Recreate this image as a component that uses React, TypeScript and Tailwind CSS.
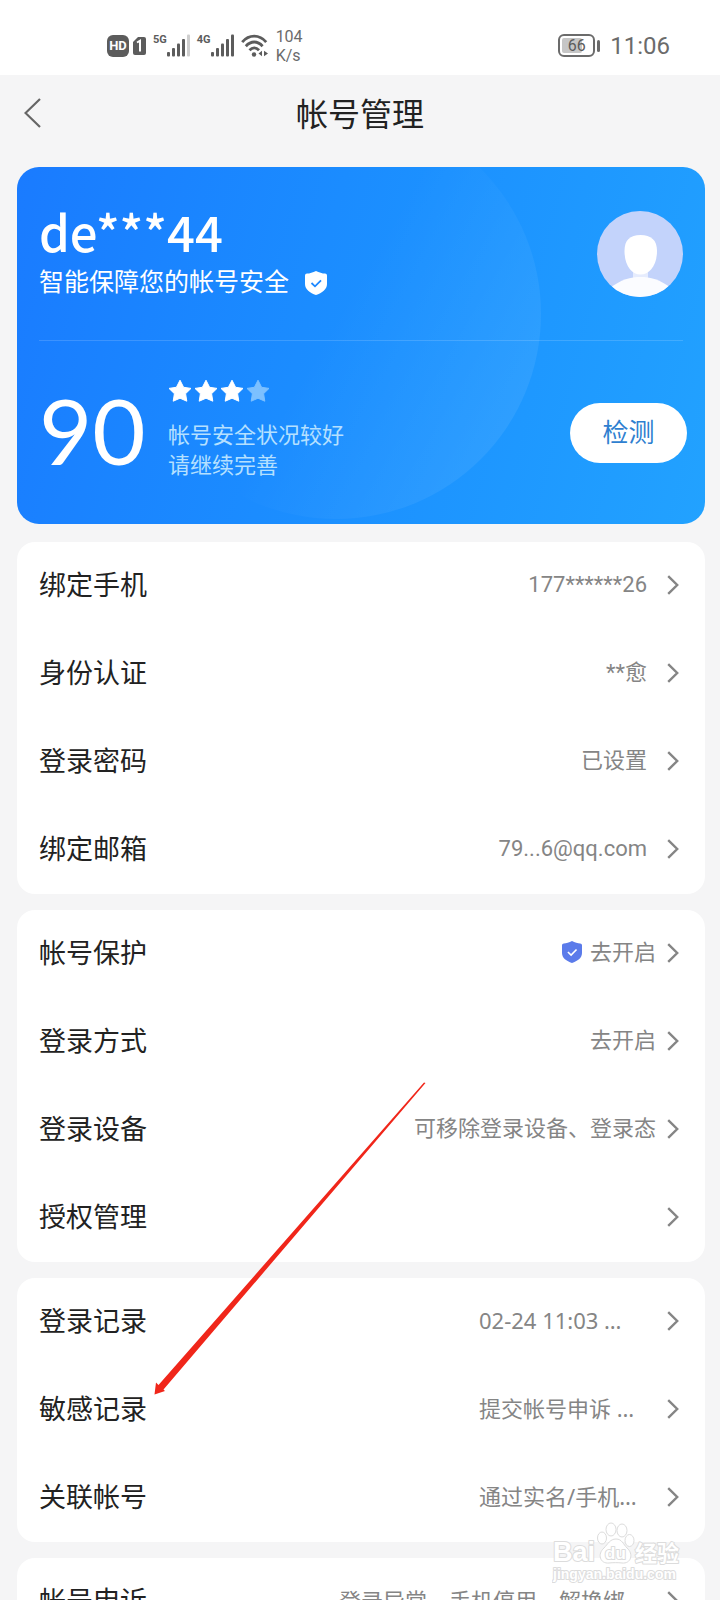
import { ReactNode } from 'react'

type Row = {
    label: string
    value?: string
    shield?: boolean
}

type Group = {
    rows: Row[]
    gap: string
    valueClass?: string
}

const groups: Group[] = [
    {
        gap: 'gap-5',
        rows: [
            { label: '绑定手机', value: '177******26' },
            { label: '身份认证', value: '**愈' },
            { label: '登录密码', value: '已设置' },
            { label: '绑定邮箱', value: '79...6@qq.com' },
        ],
    },
    {
        gap: 'gap-[11px]',
        rows: [
            { label: '帐号保护', value: '去开启', shield: true },
            { label: '登录方式', value: '去开启' },
            { label: '登录设备', value: '可移除登录设备、登录态' },
            { label: '授权管理' },
        ],
    },
    {
        gap: 'gap-5',
        valueClass: "w-[168px] font-['Noto_Sans','Noto_Sans_CJK_SC',sans-serif]",
        rows: [
            { label: '登录记录', value: '02-24 11:03 …' },
            { label: '敏感记录', value: '提交帐号申诉 …' },
            { label: '关联帐号', value: '通过实名/手机…' },
        ],
    },
    {
        gap: 'gap-5',
        valueClass: "w-[308px] font-['Noto_Sans','Noto_Sans_CJK_SC',sans-serif]",
        rows: [{ label: '帐号申诉', value: '登录异常、手机停用、解换绑…' }],
    },
]

function Shield({ className, check }: { className: string; check: string }) {
    return (
        <svg viewBox="0 0 22 24" className={className} aria-hidden="true">
            <path
                d="M11 0C14 1.6 17.500 2.500 20 2.600Q22 2.800 22 4.600V13C22 18.500 17 22 11 24C5 22 0 18.500 0 13V4.600Q0 2.800 2 2.600C4.500 2.500 8 1.600 11 0Z"
                fill="currentColor"
            />
            <path d="M6.500 12L10 15.300L16 9.300" fill="none" stroke={check} strokeWidth="1.800" />
        </svg>
    )
}

function Chevron() {
    return (
        <svg viewBox="0 0 12 20" className="h-5 w-3 shrink-0" fill="none" stroke="#858585" strokeWidth="2.400" aria-hidden="true">
            <path d="M1.200 1.200L10.200 10L1.200 18.800" />
        </svg>
    )
}

function Signal({ label, weak }: { label: string; weak?: boolean }) {
    return (
        <div className="flex items-start">
            <span className="text-[11px] leading-3 font-bold">{label}</span>
            <svg viewBox="0 0 23 23" className="h-[23px] w-[23px]" fill="currentColor" aria-hidden="true">
                <rect x="0" y="18" width="3" height="4.500" rx="1" />
                <rect x="5" y="14" width="3" height="8.500" rx="1" />
                <rect x="10" y="9.500" width="3" height="13" rx="1" />
                <rect x="15" y="5" width="3" height="17.500" rx="1" />
                <rect x="20" y="0.500" width="3" height="22" rx="1" opacity={weak ? 0.3 : 1} />
            </svg>
        </div>
    )
}

function StatusBar() {
    return (
        <div className="flex h-[75px] items-center justify-between bg-white pt-4 pr-[50px] pl-[107px] text-[#5c5c5c]">
            <div className="flex items-center gap-[7px]">
                <div className="flex items-center gap-1">
                    <span className="flex h-[22px] w-[22px] items-center justify-center rounded-md bg-[#5c5c5c] text-[13px] font-bold text-white">
                        HD
                    </span>
                    <svg viewBox="0 0 13 18" className="h-[18px] w-[13px]" aria-hidden="true">
                        <path d="M5 0H11Q13 0 13 2V16Q13 18 11 18H2Q0 18 0 16V5Z" fill="currentColor" />
                        <path d="M4 5.500L7 3.800V14.500" fill="none" stroke="#fff" strokeWidth="2" />
                    </svg>
                </div>
                <Signal label="5G" weak />
                <Signal label="4G" />
                <svg viewBox="0 0 28 24" className="h-6 w-7" fill="none" stroke="currentColor" strokeWidth="2.800" aria-hidden="true">
                    <path d="M1.200 8.200C8 0.200 18.500 0.200 25.200 8.200" />
                    <path d="M4.800 12.200C10 6.600 16.500 6.600 21.600 12.200" />
                    <path d="M8.500 16.200C11.500 13 15 13 18 16.200" />
                    <circle cx="13" cy="20.500" r="2.200" fill="currentColor" stroke="none" />
                    <path d="M17.500 19.500L21 16.800V22.200ZM27 19.500L23 16.800V22.200Z" fill="currentColor" stroke="none" />
                </svg>
                <div className="text-base leading-[19px] text-[#6b6b6b]">
                    <div>104</div>
                    <div>K/s</div>
                </div>
            </div>
            <div className="flex items-center gap-2.5">
                <div className="flex items-center gap-0.5">
                    <div className="relative flex h-[23px] w-[37px] items-center justify-center rounded-md border-2 border-[#6b6b6b] text-base">
                        <div className="absolute inset-y-0.5 left-0.5 w-5 rounded-xs bg-[#c6c6c6]" />
                        <span className="relative">66</span>
                    </div>
                    <div className="h-3 w-[3px] rounded-full bg-[#6b6b6b]" />
                </div>
                <span className="text-2xl text-[#6b6b6b]">11:06</span>
            </div>
        </div>
    )
}

function Header() {
    return (
        <header className="flex h-[92px] items-center px-6 pb-3">
            <button type="button" aria-label="返回" className="w-10 pb-1">
                <svg viewBox="0 0 17 30" className="h-[30px] w-[17px]" fill="none" stroke="#666" strokeWidth="2.200" aria-hidden="true">
                    <path d="M16 1L1.500 15L16 29" />
                </svg>
            </button>
            <h1 className="flex-1 text-center text-[32px] leading-10 text-[#222]">帐号管理</h1>
            <div className="w-10" />
        </header>
    )
}

function Star({ dim }: { dim?: boolean }) {
    return (
        <svg viewBox="0 0 24 24" className={dim ? 'h-6 w-6 text-[#7cc0ff]' : 'h-6 w-6 text-white'} fill="currentColor" stroke="currentColor" strokeLinejoin="round" aria-hidden="true">
            <path d="M12 1.200L15.600 8.300L23 9.400L17.600 14.700L18.800 22.200L12 19.200L5.200 22.200L6.400 14.700L1 9.400L8.400 8.300Z" />
        </svg>
    )
}

function SecurityCard() {
    return (
        <section className="relative overflow-hidden rounded-[22px] bg-linear-105 from-[#1a7bff] to-[#22a2ff] text-white">
            <div className="absolute -top-[58px] left-[114px] h-[410px] w-[410px] rounded-full bg-linear-120 from-transparent from-50% to-white/10" />
            <div className="relative">
                <div className="mx-[22px] flex h-[174px] items-center justify-between border-b border-white/15">
                    <div className="pb-1.5">
                        <div className="font-['Noto_Sans_CJK_SC',sans-serif] text-[49px] leading-[60px] font-medium">de***44</div>
                        <div className="mt-1 flex items-center gap-4 text-[25px] leading-9">
                            <span>智能保障您的帐号安全</span>
                            <Shield className="h-6 w-[22px]" check="#1e88ff" />
                        </div>
                    </div>
                    <svg viewBox="0 0 86 86" className="h-[86px] w-[86px] rounded-full" role="img" aria-label="头像">
                        <rect width="86" height="86" fill="#c3d3fb" />
                        <path d="M36 58H51V70H36Z" fill="#e6ecfd" />
                        <path d="M12 78C24 68 34 66 43.500 66C53 66 63 68 75 78V86H12Z" fill="#fbfcff" />
                        <path d="M27.500 40C27.500 29 33 24 43.500 24C54 24 60 29 60 40C60 55 52 63.500 43.500 63.500C35 63.500 27.500 55 27.500 40Z" fill="#fff" />
                    </svg>
                </div>
                <div className="flex h-[183px] items-center pr-[18px] pl-[22px]">
                    <div className="w-[129px] pb-1.5 font-[Lato] text-[92px] leading-[100px]">90</div>
                    <div className="flex-1 pb-1.5">
                        <div className="flex gap-0.5">
                            <Star />
                            <Star />
                            <Star />
                            <Star dim />
                        </div>
                        <p className="mt-[18px] text-[22px] leading-[30px] text-[#b5e0ff]">
                            帐号安全状况较好
                            <br />
                            请继续完善
                        </p>
                    </div>
                    <button type="button" className="h-[60px] w-[117px] rounded-full bg-white pt-0.5 text-[26px] text-[#2f7fd0]">
                        检测
                    </button>
                </div>
            </div>
        </section>
    )
}

function Card({ children }: { children: ReactNode }) {
    return <section className="rounded-[18px] bg-white">{children}</section>
}

function SettingRow({ row, group }: { row: Row; group: Group }) {
    return (
        <a href="#" className="flex h-[88px] items-center justify-between pr-[26px] pl-[22px]">
            <span className="text-[27px] text-[#222]">{row.label}</span>
            <span className={`flex items-center pb-0.5 text-[22px] text-[#858585] ${group.gap}`}>
                <span className="flex items-center gap-2 pb-0.5">
                    {row.shield && <Shield className="h-[22px] w-5 text-[#5b7bea]" check="#fff" />}
                    {row.value && <span className={group.valueClass}>{row.value}</span>}
                </span>
                <Chevron />
            </span>
        </a>
    )
}

function Arrow() {
    return (
        <svg viewBox="0 0 272 313" className="pointer-events-none absolute top-[1082px] left-[154px] h-[313px] w-[272px]" aria-hidden="true">
            <path d="M271.500 1L9.500 307.500L11 309L0.500 312.500L2 300.500L4.500 303L270 0.500Z" fill="#f0261a" />
        </svg>
    )
}

function Watermark() {
    return (
        <svg
            viewBox="0 0 130 62"
            className="pointer-events-none absolute right-[38px] bottom-[16px] h-[62px] w-[130px]"
            fill="#fff"
            stroke="#dcdcdc"
            strokeWidth="1"
            aria-label="Baidu 经验"
        >
            <ellipse cx="50" cy="16" rx="4.500" ry="6" />
            <ellipse cx="59" cy="7.500" rx="5" ry="6.500" />
            <ellipse cx="70" cy="8.500" rx="5" ry="6.500" />
            <ellipse cx="77.500" cy="18.500" rx="4.500" ry="6" />
            <path d="M64 17C70 17 71 22 75 26C82 32 79 42 70 41C66 40.500 61 40.500 57 41C48 42 45 32 52 26C56 22 58 17 64 17Z" />
            <g className="font-['Liberation_Sans','Noto_Sans_CJK_SC',sans-serif] font-bold" paintOrder="stroke" strokeWidth="2" strokeLinejoin="round">
                <text x="1" y="39" fontSize="27">Bai</text>
                <text x="53" y="37" fontSize="17">du</text>
                <text x="83" y="39" fontSize="22">经验</text>
                <text x="1" y="57" fontSize="14">jingyan.baidu.com</text>
            </g>
        </svg>
    )
}

export default function App() {
    return (
        <div className="relative h-screen overflow-hidden bg-[#f5f5f6] font-[Roboto,'Noto_Sans_CJK_SC',sans-serif]">
            <StatusBar />
            <Header />
            <main className="pr-[15px] pl-[17px]">
                <SecurityCard />
                <div className="mt-[18px] flex flex-col gap-4">
                    {groups.map((group) => (
                        <Card key={group.rows[0].label}>
                            {group.rows.map((row) => (
                                <SettingRow key={row.label} row={row} group={group} />
                            ))}
                        </Card>
                    ))}
                </div>
            </main>
            <Arrow />
            <Watermark />
        </div>
    )
}
